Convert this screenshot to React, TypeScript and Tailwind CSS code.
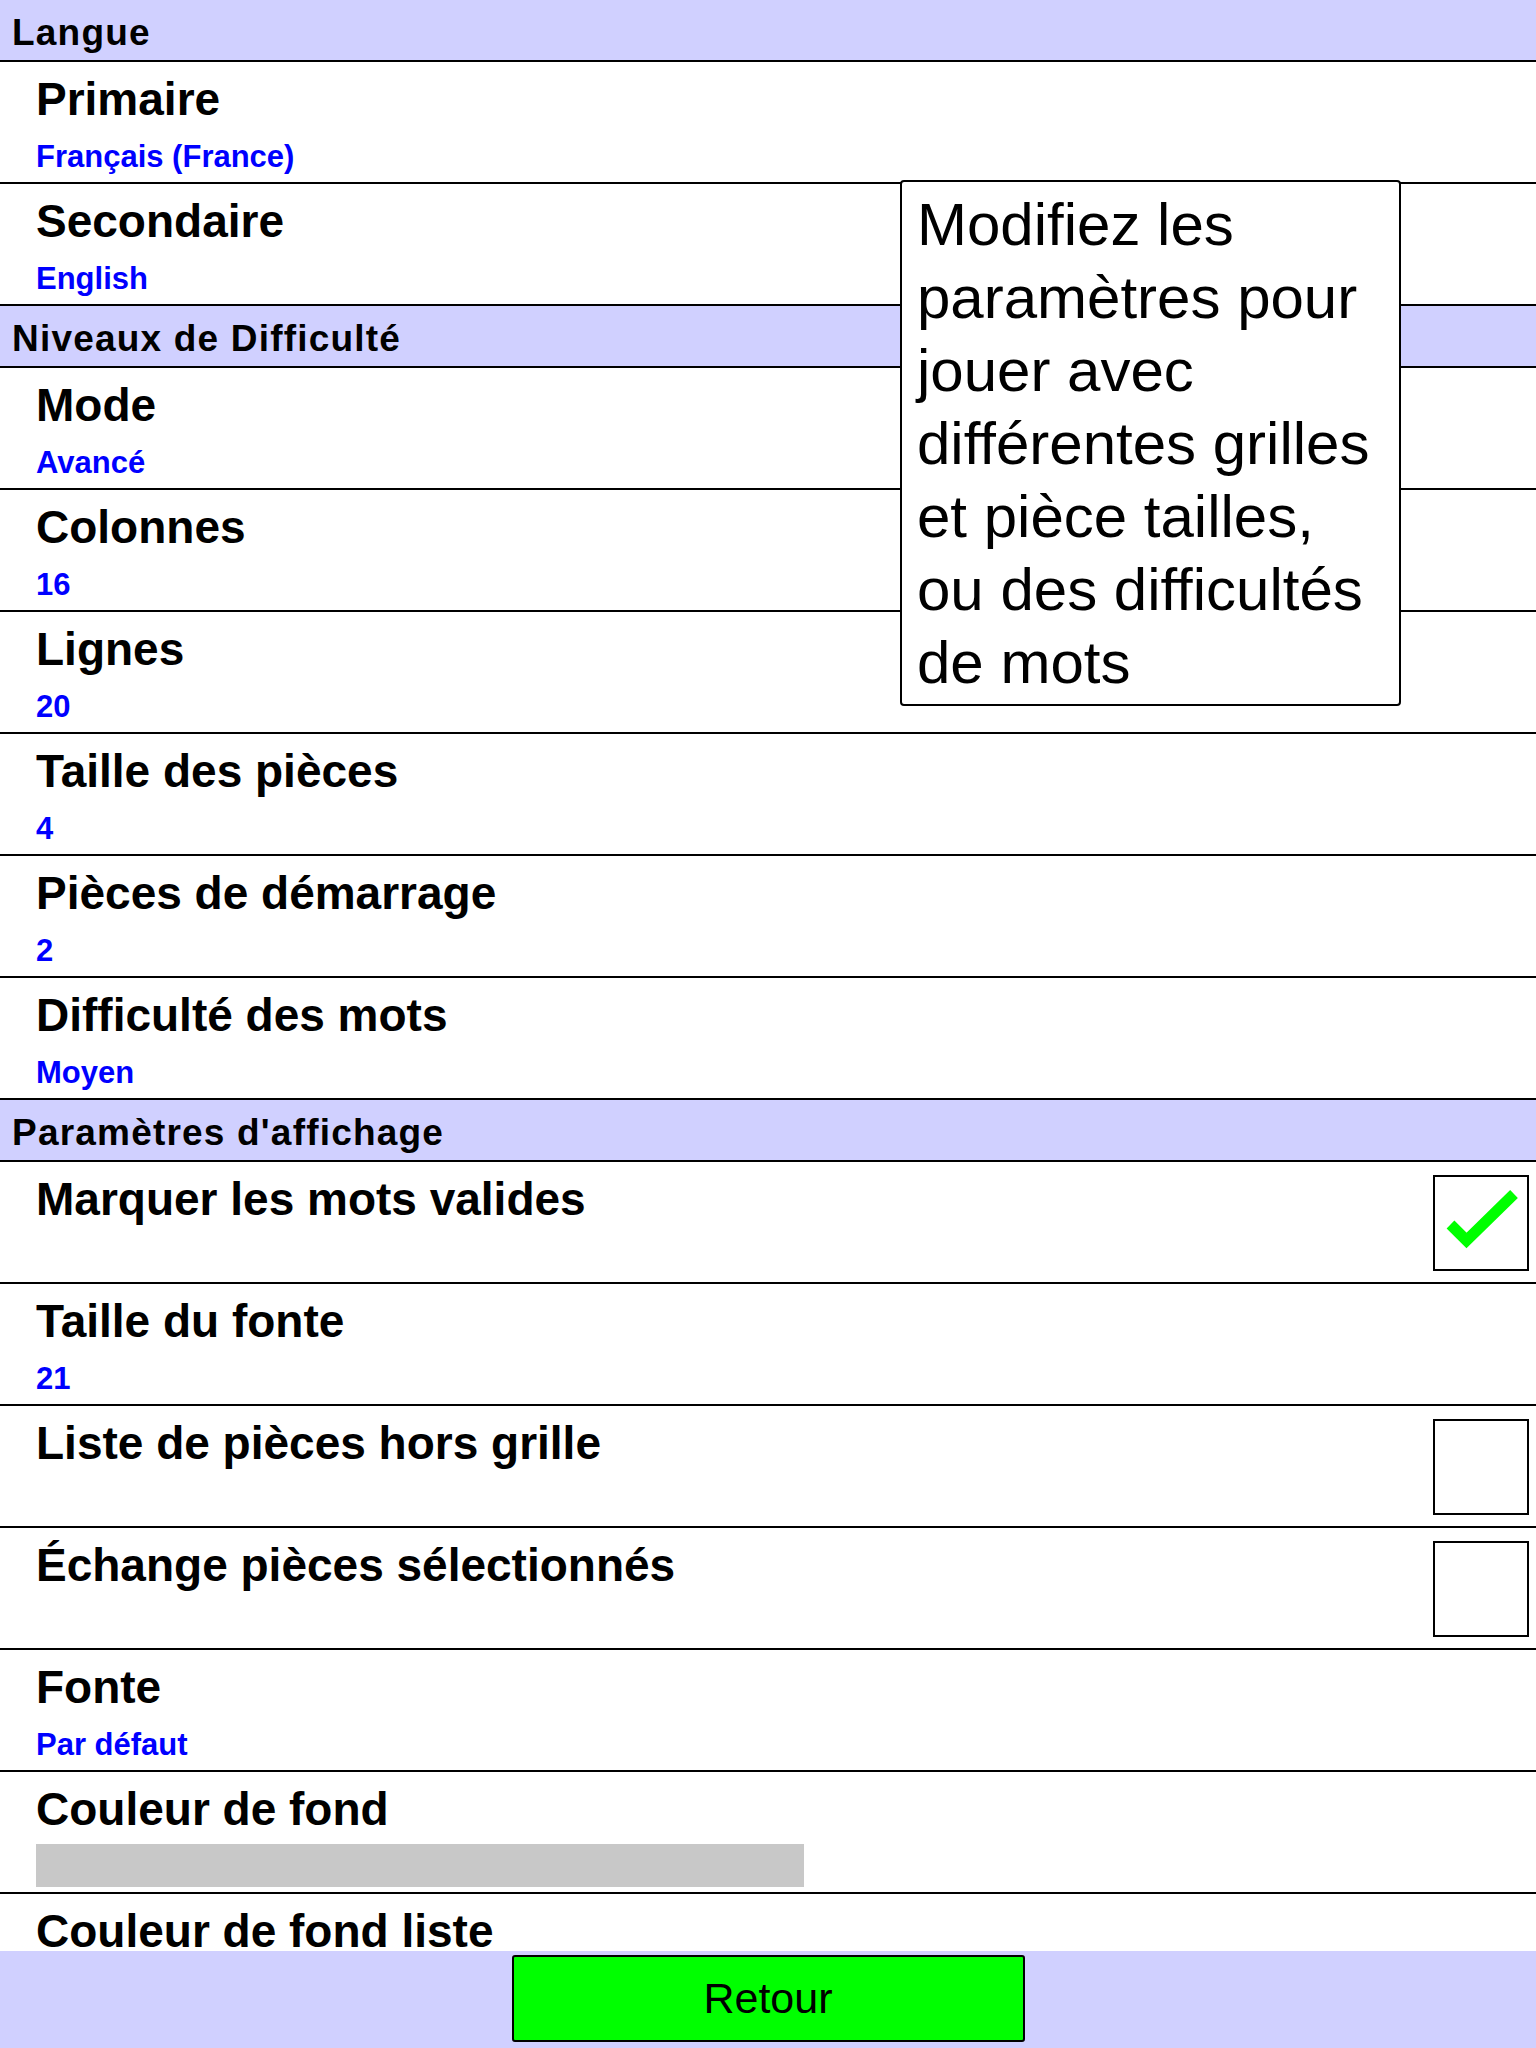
import React from "react";

type Row = { title: string; value?: string; checked?: boolean; swatch?: boolean };
type Section = { name: string; rows: Row[] };

const sections: Section[] = [
  {
    name: "Langue",
    rows: [
      { title: "Primaire", value: "Français (France)" },
      { title: "Secondaire", value: "English" },
    ],
  },
  {
    name: "Niveaux de Difficulté",
    rows: [
      { title: "Mode", value: "Avancé" },
      { title: "Colonnes", value: "16" },
      { title: "Lignes", value: "20" },
      { title: "Taille des pièces", value: "4" },
      { title: "Pièces de démarrage", value: "2" },
      { title: "Difficulté des mots", value: "Moyen" },
    ],
  },
  {
    name: "Paramètres d'affichage",
    rows: [
      { title: "Marquer les mots valides", checked: true },
      { title: "Taille du fonte", value: "21" },
      { title: "Liste de pièces hors grille", checked: false },
      { title: "Échange pièces sélectionnés", checked: false },
      { title: "Fonte", value: "Par défaut" },
      { title: "Couleur de fond", swatch: true },
      { title: "Couleur de fond liste" },
    ],
  },
];

function CheckBox({ checked }: { checked: boolean }) {
  return (
    <div className="relative w-[96px] h-[96px] mt-[13px] mr-[7px] border-2 border-black bg-white shrink-0">
      {checked && (
        <svg className="absolute inset-[-2px] w-[96px] h-[96px]" viewBox="0 0 96 96">
          <polyline
            points="17.5,49.5 33.5,65.5 81,19"
            fill="none"
            stroke="#00ff00"
            strokeWidth="11"
            strokeLinejoin="miter"
            strokeLinecap="butt"
          />
        </svg>
      )}
    </div>
  );
}

function SettingRow({ row }: { row: Row }) {
  return (
    <div className="flex h-[122px] shrink-0 border-b-2 border-black bg-white">
      <div className="flex-1 pl-[36px] pt-[14px]">
        <div className="text-[46px] leading-none font-bold text-black whitespace-nowrap">{row.title}</div>
        {row.value && (
          <div className="mt-[19px] text-[31px] leading-none font-bold text-[#0000ff]">{row.value}</div>
        )}
        {row.swatch && <div className="mt-[12px] w-[768px] h-[43px] bg-[#c8c8c8]" />}
      </div>
      {row.checked !== undefined && <CheckBox checked={row.checked} />}
    </div>
  );
}

export default function App() {
  return (
    <div className="w-[1536px] h-[2048px] flex flex-col overflow-hidden bg-white font-['Liberation_Sans',Arial,sans-serif]">
      <div className="relative flex-1 overflow-hidden flex flex-col">
        {sections.map((s) => (
          <React.Fragment key={s.name}>
            <div className="h-[62px] shrink-0 bg-[#d0d0ff] border-b-2 border-black pl-[12px] pt-[14px]">
              <div className="text-[37px] leading-none font-bold tracking-[1.2px] text-black">{s.name}</div>
            </div>
            {s.rows.map((r) => (
              <SettingRow key={r.title} row={r} />
            ))}
          </React.Fragment>
        ))}

        {/* help bubble over the list */}
        <div className="absolute left-[900px] top-[180px] w-[501px] h-[526px] bg-white border-2 border-black rounded-[4px] pl-[15px] pt-[6px]">
          <p className="text-[60px] leading-[73px] text-black whitespace-nowrap">
            Modifiez les
            <br />
            paramètres pour
            <br />
            jouer avec
            <br />
            différentes grilles
            <br />
            et pièce tailles,
            <br />
            ou des difficultés
            <br />
            de mots
          </p>
        </div>
      </div>

      <div className="h-[97px] shrink-0 bg-[#d0d0ff] flex justify-center pt-[4px]">
        <button className="w-[513px] h-[87px] bg-[#00ff00] border-2 border-black rounded-[3px] text-[43px] leading-none text-black">
          Retour
        </button>
      </div>
    </div>
  );
}
